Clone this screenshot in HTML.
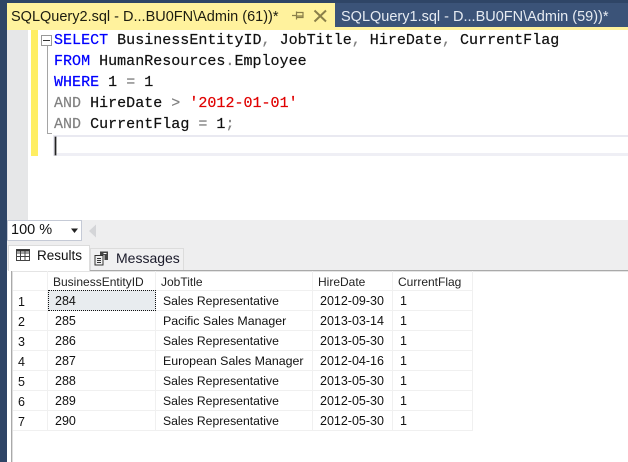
<!DOCTYPE html>
<html><head><meta charset="utf-8">
<style>
html,body{margin:0;padding:0}
body{width:628px;height:462px;position:relative;overflow:hidden;background:#fff;font-family:"Liberation Sans",sans-serif}
div{position:absolute;box-sizing:border-box}
.code{font:15px/21px "Liberation Mono",monospace;color:#111;white-space:pre;left:54px;letter-spacing:.02px;-webkit-text-stroke:.2px}
.k{color:#0000ff}.g{color:#808080}.r{color:#e00000}
.t{font-size:12.2px;line-height:20px;color:#111;white-space:pre}
.n{font-size:12.5px}
.m{font-size:12.4px}
.h{font-size:12px;line-height:20px;color:#222;white-space:pre;top:272px}
.hl{height:1px;background:#f0f0f0}
.vl{width:1px;background:#f0f0f0;top:271px;height:160px}
</style></head><body>
<div style="left:0;top:0;width:7px;height:462px;background:#2f4566"></div>
<div style="left:0;top:0;width:628px;height:3px;background:#2f4566"></div>
<div style="left:7px;top:3px;width:328px;height:27px;background:#fff29d"></div>
<div style="left:335px;top:3px;width:293px;height:24px;background:#3b5378"></div>
<div style="left:335px;top:27px;width:293px;height:3px;background:#fff29d"></div>
<div style="left:11px;top:5px;font-size:14.5px;line-height:24px;color:#1c1c10;white-space:pre">SQLQuery2.sql - D...BU0FN\Admin (61))*</div>
<div style="left:341px;top:5px;font-size:14.5px;line-height:24px;color:#e6ebf2;white-space:pre">SQLQuery1.sql - D...BU0FN\Admin (59))*</div>
<svg style="position:absolute;left:290px;top:8px" width="40" height="16" fill="none" stroke="#8a7f4a">
<path d="M2 7.5H6.5M6.5 3.5V11.5M6.5 4.5H13V9.5H6.5M6.5 8H13" stroke-width="1.2"/>
<path d="M24.5 2.5L36 13.5M36 2.5L24.5 13.5" stroke-width="2"/>
</svg>

<div style="left:7px;top:30px;width:21px;height:190px;background:#e6e7e8"></div>
<div style="left:31px;top:30px;width:7px;height:126px;background:#ffee62"></div>
<div style="left:41px;top:35px;width:11px;height:11px;border:1px solid #999;background:#fff"></div>
<div style="left:43px;top:40px;width:7px;height:1px;background:#333"></div>
<div style="left:47px;top:46px;width:1px;height:88px;background:#a5a5a5"></div>
<div style="left:47px;top:133px;width:5px;height:1px;background:#a5a5a5"></div>
<div style="left:53px;top:135px;width:575px;height:2px;background:#e9e9f1"></div>
<div style="left:53px;top:153px;width:575px;height:3px;background:#efeff5"></div>
<div style="left:53px;top:135px;width:2px;height:21px;background:#e9e9f1"></div>
<div style="left:55px;top:137px;width:1px;height:18px;background:#222;box-shadow:0 0 0 .5px #555"></div>

<div class="code" style="top:30px"><span class="k">SELECT</span> BusinessEntityID<span class="g">,</span> JobTitle<span class="g">,</span> HireDate<span class="g">,</span> CurrentFlag</div>
<div class="code" style="top:51px"><span class="k">FROM</span> HumanResources<span class="g">.</span>Employee</div>
<div class="code" style="top:72px"><span class="k">WHERE</span> 1 <span class="g">=</span> 1</div>
<div class="code" style="top:93px"><span class="g">AND</span> HireDate <span class="g">&gt;</span> <span class="r">'2012-01-01'</span></div>
<div class="code" style="top:114px"><span class="g">AND</span> CurrentFlag <span class="g">=</span> 1<span class="g">;</span></div>

<div style="left:7px;top:220px;width:621px;height:50px;background:#eeeeef"></div>
<div style="left:7px;top:220px;width:75px;height:21px;background:#fff;border:1px solid #c5cad6"></div>
<div style="left:11px;top:220px;font-size:14.5px;line-height:21px;color:#111;white-space:pre">100 %</div>
<svg style="position:absolute;left:70px;top:228px" width="10" height="6"><path d="M1 0.5H8L4.5 5Z" fill="#222"/></svg>
<svg style="position:absolute;left:88px;top:224px" width="10" height="14"><path d="M8 0.5V13.5L1 7Z" fill="#d4d5d8"/></svg>

<div style="left:90px;top:248px;width:94px;height:22px;background:#f0f0f1;border:1px solid #dcdcdc;border-bottom:0"></div>
<div style="left:8px;top:245px;width:82px;height:26px;background:#fff;border:1px solid #dcdcdc;border-bottom:0;z-index:2"></div>
<div style="left:37px;top:246px;font-size:13.5px;line-height:20px;color:#111;white-space:pre;z-index:3">Results</div>
<div style="left:116px;top:248px;font-size:14px;line-height:20px;color:#1a1a2a;white-space:pre">Messages</div>
<svg style="position:absolute;left:16px;top:249px;z-index:3" width="15" height="13" fill="none" stroke="#444"><path d="M.5 .5H13.5V11.5H.5ZM.5 4H13.5M.5 7.5H13.5M4.5 .5V11.5M9 .5V11.5" stroke-width="1"/><path d="M.5 1.5H13.5" stroke="#333" stroke-width="2"/></svg>
<svg style="position:absolute;left:94px;top:251px" width="16" height="15" fill="none" stroke="#333"><path d="M1 4.5H9V14H1ZM3 7.5H7M3 9.5H7M3 11.5H7" stroke-width="1"/><path d="M6 .5H14V9H10.5V4H6Z" fill="#444" stroke="none"/><path d="M9.5 2.5H12.5" stroke="#fff"/></svg>

<div style="left:7px;top:270px;width:4px;height:192px;background:#fff"></div>
<div style="left:11px;top:270px;width:617px;height:1px;background:#a9a9a9"></div>
<div style="left:11px;top:271px;width:617px;height:1px;background:#e4e4e4"></div>
<div style="left:11px;top:270px;width:1px;height:192px;background:#a9a9a9"></div>
<div style="left:12px;top:271px;width:1px;height:191px;background:#dedede"></div>

<div class="hl" style="left:13px;top:290px;width:460px"></div>
<div class="hl" style="left:13px;top:310px;width:460px"></div>
<div class="hl" style="left:13px;top:330px;width:460px"></div>
<div class="hl" style="left:13px;top:350px;width:460px"></div>
<div class="hl" style="left:13px;top:370px;width:460px"></div>
<div class="hl" style="left:13px;top:390px;width:460px"></div>
<div class="hl" style="left:13px;top:410px;width:460px"></div>
<div class="hl" style="left:13px;top:430px;width:460px"></div>
<div class="vl" style="left:47px"></div>
<div class="vl" style="left:155px"></div>
<div class="vl" style="left:312px"></div>
<div class="vl" style="left:392px"></div>
<div class="vl" style="left:472px"></div>

<div style="left:48px;top:290px;width:108px;height:21px;background:#e8ecef;border:1px dotted #111"></div>

<div class="h" style="left:53px">BusinessEntityID</div>
<div class="h" style="left:161px">JobTitle</div>
<div class="h" style="left:318px">HireDate</div>
<div class="h" style="left:398px">CurrentFlag</div>

<div class="t n" style="left:18px;top:292px">1</div><div class="t n" style="left:55px;top:291px">284</div><div class="t" style="left:163px;top:291px">Sales Representative</div><div class="t n" style="left:320px;top:291px">2012-09-30</div><div class="t n" style="left:400px;top:291px">1</div>
<div class="t n" style="left:18px;top:312px">2</div><div class="t n" style="left:55px;top:311px">285</div><div class="t m" style="left:163px;top:311px">Pacific Sales Manager</div><div class="t n" style="left:320px;top:311px">2013-03-14</div><div class="t n" style="left:400px;top:311px">1</div>
<div class="t n" style="left:18px;top:332px">3</div><div class="t n" style="left:55px;top:331px">286</div><div class="t" style="left:163px;top:331px">Sales Representative</div><div class="t n" style="left:320px;top:331px">2013-05-30</div><div class="t n" style="left:400px;top:331px">1</div>
<div class="t n" style="left:18px;top:352px">4</div><div class="t n" style="left:55px;top:351px">287</div><div class="t m" style="left:163px;top:351px">European Sales Manager</div><div class="t n" style="left:320px;top:351px">2012-04-16</div><div class="t n" style="left:400px;top:351px">1</div>
<div class="t n" style="left:18px;top:372px">5</div><div class="t n" style="left:55px;top:371px">288</div><div class="t" style="left:163px;top:371px">Sales Representative</div><div class="t n" style="left:320px;top:371px">2013-05-30</div><div class="t n" style="left:400px;top:371px">1</div>
<div class="t n" style="left:18px;top:392px">6</div><div class="t n" style="left:55px;top:391px">289</div><div class="t" style="left:163px;top:391px">Sales Representative</div><div class="t n" style="left:320px;top:391px">2012-05-30</div><div class="t n" style="left:400px;top:391px">1</div>
<div class="t n" style="left:18px;top:412px">7</div><div class="t n" style="left:55px;top:411px">290</div><div class="t" style="left:163px;top:411px">Sales Representative</div><div class="t n" style="left:320px;top:411px">2012-05-30</div><div class="t n" style="left:400px;top:411px">1</div>
</body></html>
